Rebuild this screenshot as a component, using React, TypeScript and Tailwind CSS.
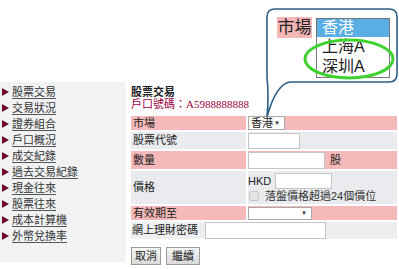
import React from "react";

const menu = [
  "股票交易",
  "交易狀況",
  "證券組合",
  "戶口概況",
  "成交紀錄",
  "過去交易紀錄",
  "現金往來",
  "股票往來",
  "成本計算機",
  "外幣兌換率",
];

function Arrow() {
  return (
    <svg width="7" height="8" viewBox="0 0 7 8" className="shrink-0">
      <polygon points="0,0 7,4 0,8" fill="#6e0b2c" />
    </svg>
  );
}

function Caret() {
  return <span className="ml-auto mr-[4px] text-[6px] leading-none text-[#333]">▼</span>;
}

export default function App() {
  return (
    <div className="relative h-[269px] w-[399px] overflow-hidden bg-white font-['Liberation_Sans','Noto_Sans_CJK_TC',sans-serif] text-[11px] text-[#222]">
      {/* ─── Empty top band (callout sits over it) ─── */}
      <div className="h-[82px]" />

      <div className="flex">
        {/* ─── Side menu ─── */}
        <nav className="h-[180px] w-[126px] bg-[#f1f2f4] pt-[2px]">
          {menu.map((m) => (
            <a
              key={m}
              className="flex h-[16px] items-center gap-[3px] pl-[2px] leading-none text-[#333] underline decoration-[#555] underline-offset-2"
            >
              <Arrow />
              {m}
            </a>
          ))}
        </nav>

        {/* ─── Order form ─── */}
        <main className="flex-1 pl-[5px] pr-[2px]">
          <h3 className="mt-[5px] text-[11px] font-bold leading-[11px] text-[#222]">股票交易</h3>
          <p className="mt-[1px] leading-[11px] text-[#9c0040]">
            戶口號碼：<span className="font-['Liberation_Serif',serif]">A5988888888</span>
          </p>

          <div className="mt-[6px] flex flex-col gap-[2px]">
            {/* 市場 */}
            <div className="flex h-[14px]">
              <div className="flex w-[115px] items-center bg-[#f6b9b9] pl-[2px]">市場</div>
              <div className="ml-[2px] flex flex-1 items-center bg-[#f6b9b9]">
                <div className="flex h-[14px] w-[37px] items-center border border-[#a9a9a9] bg-white pl-[2px] leading-none">
                  香港
                  <Caret />
                </div>
              </div>
            </div>

            {/* 股票代號 */}
            <div className="flex h-[17px]">
              <div className="flex w-[115px] items-center bg-[#e9ebee] pl-[2px]">股票代號</div>
              <div className="ml-[2px] flex flex-1 items-center bg-[#e9ebee]">
                <div className="h-[16px] w-[52px] border border-[#c4c4c4] bg-white" />
              </div>
            </div>

            {/* 數量 */}
            <div className="flex h-[18px]">
              <div className="flex w-[115px] items-center bg-[#f6b9b9] pl-[2px]">數量</div>
              <div className="ml-[2px] flex flex-1 items-center bg-[#f6b9b9]">
                <div className="h-[17px] w-[77px] border border-[#c4c4c4] bg-white" />
                <span className="ml-[5px]">股</span>
              </div>
            </div>

            {/* 價格 */}
            <div className="flex h-[33px]">
              <div className="flex w-[115px] items-center bg-[#e9ebee] pl-[2px]">價格</div>
              <div className="ml-[2px] flex flex-1 flex-col justify-center bg-[#e9ebee]">
                <div className="flex items-center">
                  <span className="font-['Liberation_Sans',sans-serif] text-[11px] leading-none">HKD</span>
                  <div className="ml-[4px] h-[16px] w-[57px] border border-[#c4c4c4] bg-white" />
                </div>
                <div className="mt-[1px] flex items-center">
                  <div className="ml-[1px] h-[10px] w-[10px] rounded-[2px] border border-[#c8c8c8] bg-[#e4e4e4]" />
                  <span className="ml-[6px] leading-[12px] text-[#333]">落盤價格超過24個價位</span>
                </div>
              </div>
            </div>

            {/* 有效期至 */}
            <div className="flex h-[14px]">
              <div className="flex w-[115px] items-center bg-[#f6b9b9] pl-[2px]">有效期至</div>
              <div className="ml-[2px] flex flex-1 items-center bg-[#f6b9b9]">
                <div className="flex h-[13px] w-[64px] items-center border border-[#a9a9a9] bg-white">
                  <Caret />
                </div>
              </div>
            </div>

            {/* 網上理財密碼 */}
            <div className="flex h-[17px] items-center bg-[#eceef0]">
              <span className="pl-[1px]">網上理財密碼</span>
              <div className="ml-[7px] h-[17px] w-[121px] border border-[#c4c4c4] bg-white" />
            </div>
          </div>

          <div className="mt-[8px] flex gap-[5px]">
            <button className="h-[18px] w-[30px] border border-[#9a9a9a] bg-gradient-to-b from-[#f6f6f6] to-[#d9d9d9] text-[11px] leading-none">
              取消
            </button>
            <button className="h-[18px] w-[34px] border border-[#9a9a9a] bg-gradient-to-b from-[#f6f6f6] to-[#d9d9d9] text-[11px] leading-none">
              繼續
            </button>
          </div>
        </main>
      </div>

      {/* ─── Callout: market dropdown ─── */}
      <div className="absolute left-[277px] top-[17px] flex h-[21px] w-[35px] items-center justify-center bg-[#f4b7b7] text-[17px] leading-none text-[#222]">
        市場
      </div>
      <div className="absolute left-[316px] top-[18px] flex h-[60px] w-[74px] flex-col border border-[#777] bg-white text-[16px] leading-none text-[#222]">
        <div className="flex h-[18px] items-center bg-[#5aaee3] pl-[5px] text-white">香港</div>
        <div className="flex h-[20px] items-center pl-[5px]">上海A</div>
        <div className="flex h-[20px] items-center pl-[5px]">深圳A</div>
      </div>
      <svg
        className="pointer-events-none absolute left-[260px] top-[5px]"
        width="139"
        height="115"
        viewBox="0 0 139 115"
      >
        <path
          d="M15 4 H129 Q137 4 137 12 V69 Q137 77 129 77 H30 Q16 79 7 112 Q9 92 7 72 V12 Q7 4 15 4 Z"
          fill="none"
          stroke="#2d5f86"
          strokeWidth="1.6"
        />
        <ellipse cx="89" cy="54" rx="44" ry="19" fill="none" stroke="#3fd22f" strokeWidth="3" />
      </svg>
    </div>
  );
}
